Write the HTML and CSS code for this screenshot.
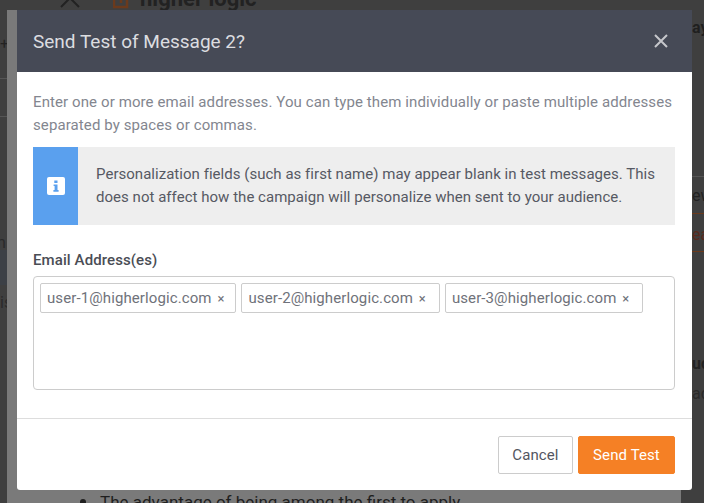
FILE: index.html
```html
<!DOCTYPE html>
<html>
<head>
  <meta charset="utf-8" />
  <meta name="viewport" content="width=device-width, initial-scale=1" />
  <title>Send Test of Message 2?</title>
  <link rel="stylesheet" href="styles.css">
</head>
<body>

  <!-- page dimmed behind the dialog -->
  <div class="behind">
    <div class="tint"></div>
    <svg class="bg-x" width="20" height="10" viewBox="0 0 20 10"><path d="M1 9 L10 0 L19 9" fill="none" stroke="#222" stroke-width="2"/></svg>
    <svg class="bg-logo" width="16" height="10" viewBox="0 0 16 10"><path d="M1 0 V8 H14 V0 M8 0 V4" fill="none" stroke="#6b3a1c" stroke-width="2.5"/></svg>
    <span class="bg-text bg-brand">higher logic</span>
    <span class="bg-text bg-plus">+</span>
    <span class="bg-rule bg-l1"></span>
    <span class="bg-rule bg-l2"></span>
    <span class="bg-text bg-gn">gn</span>
    <span class="bg-text bg-is">is</span>
    <span class="bg-text bg-ay">ay</span>
    <span class="bg-rule bg-r1"></span>
    <span class="bg-text bg-ew">ew</span>
    <span class="bg-rule bg-r2"></span>
    <span class="bg-text bg-ea">ea</span>
    <span class="bg-rule bg-r3"></span>
    <span class="bg-text bg-uc">uc</span>
    <span class="bg-text bg-ad">ad</span>
    <div class="sheet"></div>
    <span class="bg-text bg-item">The advantage of being among the first to apply</span>
    <span class="bg-dot"></span>
  </div>

  <div class="modal">
    <header class="modal-head">
      <h1>Send Test of Message 2?</h1>
      <svg class="close" width="14" height="14" viewBox="0 0 14 14"><path d="M1 1 L13 13 M13 1 L1 13" fill="none" stroke="#c6c7cb" stroke-width="2"/></svg>
    </header>

    <div class="modal-body">
      <p class="intro">Enter one or more email addresses. You can type them individually or paste multiple addresses separated by spaces or commas.</p>

      <div class="alert">
        <div class="alert-icon">
          <svg width="18" height="18" viewBox="0 0 18 18">
            <rect width="18" height="18" rx="2" fill="#fff"/>
            <path d="M7.3 3.4h3.2v2.6H7.3z M6.6 7.4h3.9v5.6h1.1v1.7H6.4V13h1.2V9.1h-1z" fill="#5aa0ee"/>
          </svg>
        </div>
        <p>Personalization fields (such as first name) may appear blank in test messages. This does not affect how the campaign will personalize when sent to your audience.</p>
      </div>

      <label class="field-label">Email Address(es)</label>
      <div class="tags">
        <span class="tag">user-1@higherlogic.com <i>×</i></span>
        <span class="tag">user-2@higherlogic.com <i>×</i></span>
        <span class="tag">user-3@higherlogic.com <i>×</i></span>
      </div>
    </div>

    <footer class="modal-foot">
      <button class="btn">Cancel</button>
      <button class="btn btn-send">Send Test</button>
    </footer>
  </div>

</body>
</html>
```

FILE: styles.css
```css
* {
  box-sizing: border-box;
}
html, body {
  margin: 0;
  height: 503px;
  overflow: hidden;
}
body {
  position: relative;
  padding: 10px 12px 0 17px;
  font: 15px/23px Roboto, Arial, sans-serif;
  color: #5d6069;
  background: #3f3f3f;
}

/* behind the dialog */
.behind {
  position: absolute;
  top: 0;
  left: 0;
  width: 704px;
  height: 503px;
  overflow: hidden;
}
.sheet {
  position: absolute;
  left: 7px;
  top: 10px;
  width: 674px;
  height: 493px;
  background: #7a7a7a;
}
.tint {
  position: absolute;
  left: 0;
  top: 250px;
  width: 7px;
  height: 35px;
  background: #3c4046;
}
.bg-text {
  position: absolute;
  font-size: 16px;
  line-height: 20px;
  color: #222;
  white-space: nowrap;
}
.bg-rule {
  position: absolute;
  height: 1px;
  background: #555;
}
.bg-x { position: absolute; left: 60px; top: -2px; }
.bg-logo { position: absolute; left: 113px; top: -1px; }
.bg-brand { left: 140px; top: -11px; font-size: 22px; font-weight: 700; }
.bg-plus { left: 0; top: 34px; font-size: 15px; }
.bg-l1 { left: 0; top: 78px; width: 7px; }
.bg-l2 { left: 0; top: 116px; width: 7px; }
.bg-gn { left: -12px; top: 233px; color: #2a2a2a; }
.bg-is { left: 0; top: 293px; color: #2a2a2a; }
.bg-ay { left: 692px; top: 18px; font-weight: 700; color: #1f1f1f; }
.bg-r1 { left: 692px; top: 176px; width: 12px; }
.bg-ew { left: 692px; top: 186px; color: #222; }
.bg-r2 { left: 692px; top: 213px; width: 12px; background: #6b3a1c; }
.bg-ea { left: 692px; top: 225px; color: #5a2a1c; }
.bg-r3 { left: 692px; top: 251px; width: 12px; background: #6b3a1c; }
.bg-uc { left: 692px; top: 354px; font-weight: 700; color: #222; }
.bg-ad { left: 692px; top: 384px; color: #2a2a2a; }
.bg-item { left: 100px; top: 492px; color: #1f1f1f; font-size: 17px; }
.bg-dot {
  position: absolute;
  left: 80px;
  top: 499px;
  width: 6px;
  height: 6px;
  border-radius: 50%;
  background: #1f1f1f;
}

/* dialog */
.modal {
  position: relative;
  width: 675px;
  height: 480px;
  display: flex;
  flex-direction: column;
  background: #fff;
  border-radius: 0 0 3px 3px;
}
.modal-head {
  height: 62px;
  flex: none;
  display: flex;
  align-items: center;
  justify-content: space-between;
  padding: 0 24px 0 16px;
  background: #464a56;
}
.modal-head h1 {
  margin: 1px 0 0;
  font-size: 19px;
  font-weight: 400;
  color: #dcdde0;
}
.close {
  display: block;
}
.modal-body {
  flex: 1;
  padding: 19px 17px 0 16px;
}
.intro {
  margin: 0 0 10px;
  color: #83868f;
  letter-spacing: .1px;
}
.alert {
  display: flex;
  height: 78px;
  background: #eee;
}
.alert-icon {
  width: 45px;
  flex: none;
  display: flex;
  align-items: center;
  justify-content: center;
  background: #5aa0ee;
}
.alert p {
  margin: 0;
  padding: 16px 18px;
  color: #565963;
  letter-spacing: .03px;
}
.field-label {
  display: block;
  margin: 24px 0 4px;
  font-weight: 500;
  color: #4a4d55;
  letter-spacing: .1px;
}
.tags {
  height: 114px;
  display: flex;
  align-items: flex-start;
  gap: 5px;
  padding: 6px;
  border: 1px solid #ccc;
  border-radius: 4px;
}
.tag {
  height: 30px;
  padding: 0 13px 0 6px;
  line-height: 28px;
  border: 1px solid #ccc;
  border-radius: 2px;
  color: #6f727a;
  letter-spacing: .1px;
  white-space: nowrap;
}
.tag:first-child {
  padding-right: 11px;
}
.tag i {
  margin-left: 2px;
  font-style: normal;
  font-size: 13px;
}
.modal-foot {
  flex: none;
  display: flex;
  justify-content: flex-end;
  gap: 5px;
  height: 72px;
  padding: 17px 17px 0 0;
  border-top: 1px solid #ddd;
}
.btn {
  height: 38px;
  width: 75px;
  padding: 0;
  font: 15px Roboto, Arial, sans-serif;
  letter-spacing: .1px;
  color: #53565f;
  background: #fff;
  border: 1px solid #ccc;
  border-radius: 2px;
}
.btn-send {
  width: 97px;
  color: #fff;
  background: #f58025;
  border-color: #f58025;
}
```
